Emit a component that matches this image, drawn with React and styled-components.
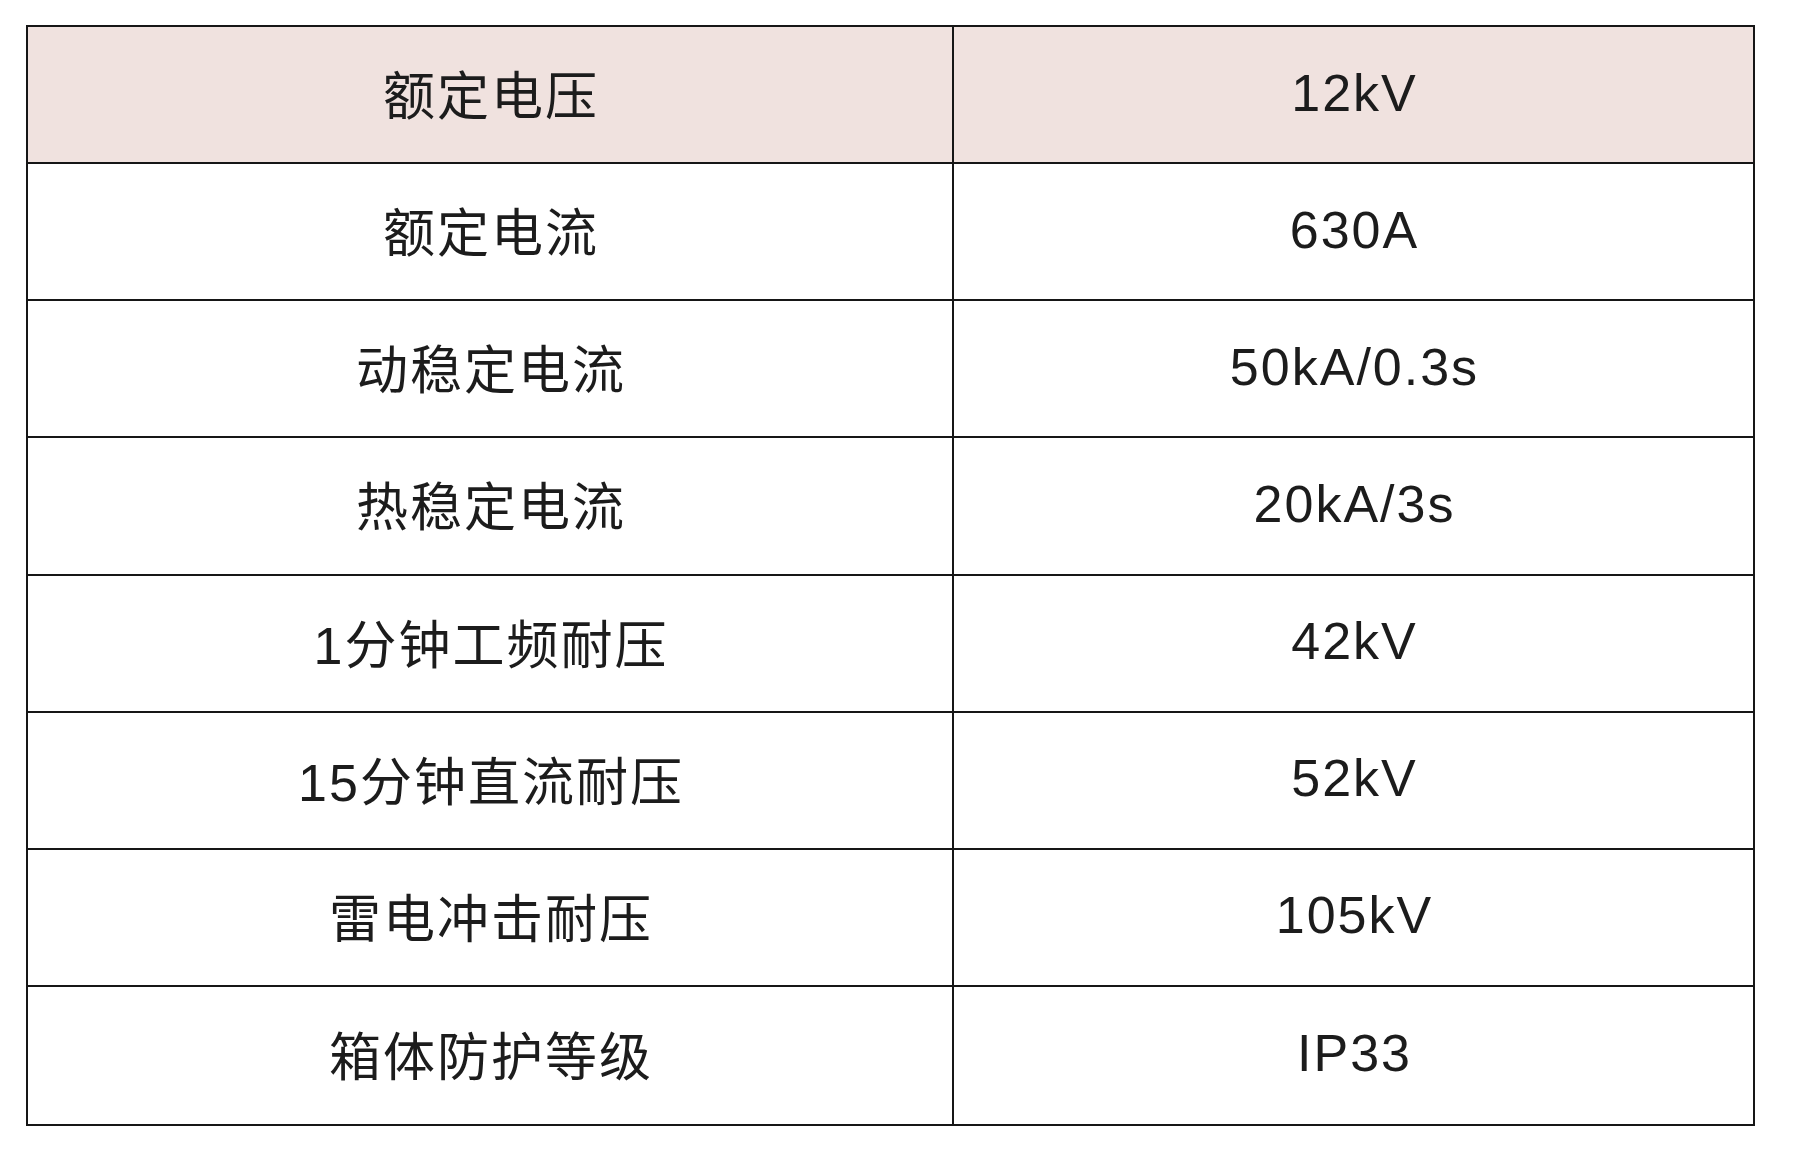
import React from "react";
import styled, { createGlobalStyle } from "styled-components";

const Global = createGlobalStyle`
  html, body { margin: 0; padding: 0; background: #ffffff; }
  body { width: 1800px; height: 1162px; overflow: hidden; }
`;

const Page = styled.div`
  box-sizing: border-box;
  width: 1800px;
  height: 1162px;
  padding: 25px 0 0 26px;
  background: #ffffff;
`;

const Table = styled.div`
  box-sizing: border-box;
  width: 1729px;
  height: 1101px;
  border: 2px solid #161616;
  display: grid;
  grid-template-rows: repeat(8, 1fr);
`;

const Row = styled.div`
  display: grid;
  grid-template-columns: 926px 1fr;
  background: ${(p) => (p.$head ? "#f0e2df" : "#ffffff")};
  border-bottom: ${(p) => (p.$last ? "none" : "2px solid #161616")};
`;

const Cell = styled.div`
  display: flex;
  align-items: center;
  justify-content: center;
  padding: 0 0 4px 2px;
  font-family: "Liberation Sans", "Noto Sans CJK SC", sans-serif;
  font-size: 52px;
  letter-spacing: 2px;
  color: #1c1c1c;
  border-right: ${(p) => (p.$first ? "2px solid #161616" : "none")};
`;

const rows = [
  ["额定电压", "12kV"],
  ["额定电流", "630A"],
  ["动稳定电流", "50kA/0.3s"],
  ["热稳定电流", "20kA/3s"],
  ["1分钟工频耐压", "42kV"],
  ["15分钟直流耐压", "52kV"],
  ["雷电冲击耐压", "105kV"],
  ["箱体防护等级", "IP33"],
];

export default function App() {
  return (
    <>
      <Global />
      <Page>
        <Table>
          {rows.map(([k, v], i) => (
            <Row key={k} $head={i === 0} $last={i === rows.length - 1}>
              <Cell $first>{k}</Cell>
              <Cell>{v}</Cell>
            </Row>
          ))}
        </Table>
      </Page>
    </>
  );
}
